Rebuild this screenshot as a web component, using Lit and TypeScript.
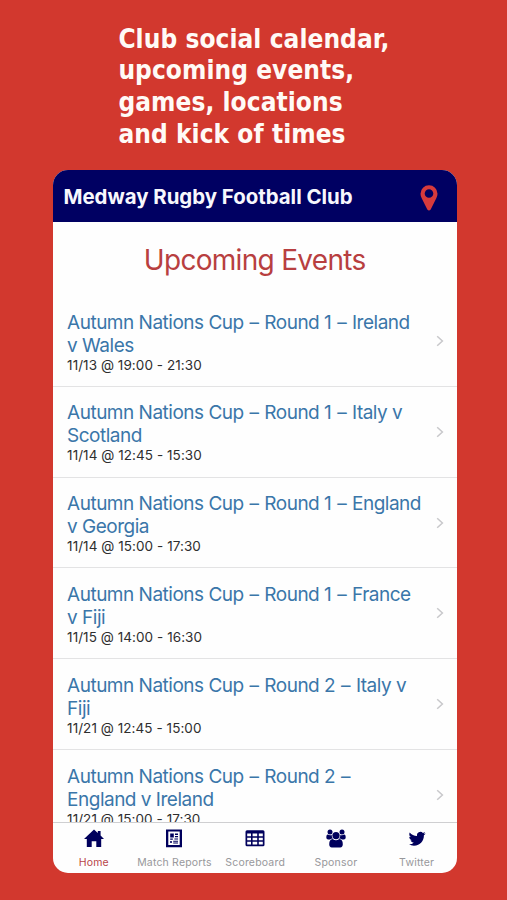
import { LitElement, html, css, svg } from "lit";
import { customElement } from "lit/decorators.js";
import { classMap } from "lit/directives/class-map.js";

interface ClubEvent {
  title: string[];
  time: string;
}

const EVENTS: ClubEvent[] = [
  { title: ["Autumn Nations Cup – Round 1 – Ireland", "v Wales"], time: "11/13 @ 19:00 - 21:30" },
  { title: ["Autumn Nations Cup – Round 1 – Italy v", "Scotland"], time: "11/14 @ 12:45 - 15:30" },
  { title: ["Autumn Nations Cup – Round 1 – England", "v Georgia"], time: "11/14 @ 15:00 - 17:30" },
  { title: ["Autumn Nations Cup – Round 1 – France", "v Fiji"], time: "11/15 @ 14:00 - 16:30" },
  { title: ["Autumn Nations Cup – Round 2 – Italy v", "Fiji"], time: "11/21 @ 12:45 - 15:00" },
  { title: ["Autumn Nations Cup – Round 2 –", "England v Ireland"], time: "11/21 @ 15:00 - 17:30" },
];

const HOME = svg`<path d="M10 0.4 13.8 3.9V1.9H16.6V6.5L20 9.9H17.2V18H12.3V12.2H7.7V18H2.8V9.9H0Z"/>`;

const REPORT = svg`
  <path fill-rule="evenodd" d="M2 0.4H18V18.2H2ZM4.3 2.6V16H15.7V2.6Z"/>
  <path d="M6.2 4.6h3.6v3.8h-3.6zM11 4.6h3v1.3h-3zM11 6.9h3v1.3h-3zM6.2 9.6h2.6v1.2h-2.6zM10.4 9.4h3.6v1.2h-3.6zM6.2 12h1.6v2h-1.6zM9.2 11.7h4.8v1h-4.8zM9.2 13.5h4.8v1h-4.8z"/>`;

const TABLE = svg`<path fill-rule="evenodd" d="M2 1.3H18Q19.5 1.3 19.5 2.8V15.8Q19.5 17.3 18 17.3H2Q0.5 17.3 0.5 15.8V2.8Q0.5 1.3 2 1.3ZM2.2 4.6V7.2H6V4.6ZM7.6 4.6V7.2H12.2V4.6ZM13.8 4.6V7.2H17.8V4.6ZM2.2 8.7V11.3H6V8.7ZM7.6 8.7V11.3H12.2V8.7ZM13.8 8.7V11.3H17.8V8.7ZM2.2 12.8V15.6H6V12.8ZM7.6 12.8V15.6H12.2V12.8ZM13.8 12.8V15.6H17.8V12.8Z"/>`;

const GROUP = svg`
  <circle cx="4" cy="2.9" r="2.5"/><circle cx="16" cy="2.9" r="2.5"/>
  <path d="M0.3 8.6Q0.3 5.6 1.8 5.6Q4 6.8 5.7 5.9Q5.5 8.1 7 9.6Q5 9.6 4 10.6H2.2Q0.3 10.6 0.3 8.6ZM19.7 8.6Q19.7 5.6 18.2 5.6Q16 6.8 14.3 5.9Q14.5 8.1 13 9.6Q15 9.6 16 10.6H17.8Q19.7 10.6 19.7 8.6Z"/>
  <circle cx="10" cy="6.6" r="3.6"/>
  <path d="M6.7 9.9Q10 12.4 13.3 9.9Q16.8 10.1 16.8 15.3Q16.8 18.4 14.2 18.4H5.8Q3.2 18.4 3.2 15.3Q3.2 10.1 6.7 9.9Z"/>`;

const BIRD = svg`<path transform="translate(1.6 1.2) scale(.71)" d="M23.95 4.57a10 10 0 0 1-2.82.77 4.96 4.96 0 0 0 2.16-2.72c-.95.55-2 .95-3.13 1.18a4.92 4.92 0 0 0-8.38 4.48C7.69 8.09 4.07 6.13 1.64 3.16a4.82 4.82 0 0 0-.66 2.48c0 1.71.87 3.21 2.19 4.1a4.9 4.9 0 0 1-2.23-.62v.06a4.92 4.92 0 0 0 3.95 4.83 5 5 0 0 1-2.21.08 4.94 4.94 0 0 0 4.6 3.42A9.87 9.87 0 0 1 0 19.54a14 14 0 0 0 7.55 2.21c9.05 0 14-7.5 14-13.98 0-.21 0-.42-.02-.63a9.94 9.94 0 0 0 2.46-2.55z"/>`;

const TABS = [
  { label: "Home", icon: HOME, key: "home" },
  { label: "Match Reports", icon: REPORT, key: "reports" },
  { label: "Scoreboard", icon: TABLE, key: "scores" },
  { label: "Sponsor", icon: GROUP, key: "sponsor" },
  { label: "Twitter", icon: BIRD, key: "twitter" },
];

const withDashes = (line: string) =>
  line.split("–").map((part, i) => (i === 0 ? part : html`<span class="dash">–</span>${part}`));

@customElement("event-row")
class EventRow extends LitElement {
  static properties = { event: { attribute: false } };
  declare event: ClubEvent;

  static styles = css`
    :host {
      display: flex;
      box-sizing: border-box;
      flex: none;
      height: 90.8px;
      padding: 14.6px 13px 0 13.7px;
      border-bottom: 1px solid #e3e3e4;
      justify-content: space-between;
    }
    .title {
      font-size: 19px;
      line-height: 23px;
      color: #3a76a9;
      letter-spacing: -0.5px;
      white-space: nowrap;
    }
    .line { display: block; }
    .dash { margin: 0 1px; }
    .time {
      font-size: 13.5px;
      line-height: 17px;
      letter-spacing: 0.06px;
      color: #2e2e2e;
      white-space: nowrap;
    }
    .chevron {
      flex: none;
      width: 8px;
      height: 12px;
      margin-top: 24.5px;
      fill: none;
      stroke: #c8c8cb;
      stroke-width: 1.5;
    }
  `;

  render() {
    return html`
      <div class="text">
        <div class="title">${this.event.title.map((l) => html`<span class="line">${withDashes(l)}</span>`)}</div>
        <div class="time">${this.event.time}</div>
      </div>
      <svg class="chevron" viewBox="0 0 8 12"><path d="M1.2 1.2 6.4 6 1.2 10.8" /></svg>
    `;
  }
}

@customElement("app-root")
class AppRoot extends LitElement {
  static styles = css`
    :host {
      display: flex;
      flex-direction: column;
      box-sizing: border-box;
      height: 900px;
      padding: 23.5px 50px 27px 53.4px;
      overflow: hidden;
      background: #d2382e;
      font-family: Inter, "Liberation Sans", sans-serif;
    }
    .headline {
      flex: none;
      height: 146.5px;
      margin: 0;
      padding-left: 65px;
      box-sizing: border-box;
      color: #fffaf6;
      font: 700 26px/31.7px "DejaVu Sans Condensed", "Noto Sans", sans-serif;
      letter-spacing: 0.06px;
      white-space: nowrap;
    }
    .phone {
      display: flex;
      flex-direction: column;
      flex: 1;
      min-height: 0;
      border-radius: 15px;
      overflow: hidden;
      background: #fefefe;
    }
    .bar {
      display: flex;
      flex: none;
      box-sizing: border-box;
      height: 52px;
      padding: 0 19px 0 10px;
      align-items: center;
      justify-content: space-between;
      background: #000062;
    }
    .club {
      color: #f7f7fd;
      font-size: 20.4px;
      font-weight: 700;
      line-height: 24px;
      padding-top: 1px;
      white-space: nowrap;
    }
    .pin { width: 18px; height: 26px; margin-top: 4px; fill: #d63a3c; }
    .events {
      display: flex;
      flex-direction: column;
      flex: 1;
      min-height: 0;
      overflow: hidden;
    }
    .heading {
      flex: none;
      height: 74px;
      margin: 0;
      padding-right: 1px;
      color: #b83f40;
      font-size: 28px;
      font-weight: 400;
      line-height: 76.5px;
      letter-spacing: -0.7px;
      text-align: center;
      white-space: nowrap;
    }
    .tabs {
      display: grid;
      grid-template-columns: repeat(5, 1fr);
      flex: none;
      box-sizing: border-box;
      height: 51px;
      border-top: 1px solid #cfcfd1;
    }
    .tab {
      display: flex;
      flex-direction: column;
      align-items: center;
      padding-top: 6px;
      color: #98989b;
      font-size: 10.5px;
      line-height: 13px;
      letter-spacing: 0.18px;
      white-space: nowrap;
    }
    .active { color: #b84447; }
    .icon { width: 20px; height: 19px; margin-bottom: 7.5px; fill: #00005c; }
  `;

  render() {
    return html`
      <h1 class="headline">
        Club social calendar,<br />upcoming events,<br />games, locations<br />and kick of times
      </h1>
      <main class="phone">
        <header class="bar">
          <span class="club">Medway Rugby Football Club</span>
          <svg class="pin" viewBox="0 0 18 26">
            <path fill-rule="evenodd" d="M9 0.2A8.5 8.5 0 0 0 .5 8.7Q.5 10.8 1.7 13.3L7.3 24.5Q9 26.6 10.7 24.5L16.3 13.3Q17.5 10.8 17.5 8.7A8.5 8.5 0 0 0 9 .2ZM9 4.2A4.3 4.3 0 1 1 9 12.8A4.3 4.3 0 1 1 9 4.2Z" />
          </svg>
        </header>
        <section class="events">
          <h2 class="heading">Upcoming Events</h2>
          ${EVENTS.map((e) => html`<event-row .event=${e}></event-row>`)}
        </section>
        <nav class="tabs">
          ${TABS.map(
            (t, i) => html`<div class=${classMap({ tab: true, active: i === 0, [t.key]: true })}>
              <svg class="icon" viewBox="0 0 20 19">${t.icon}</svg>
              <span>${t.label}</span>
            </div>`
          )}
        </nav>
      </main>
    `;
  }
}
